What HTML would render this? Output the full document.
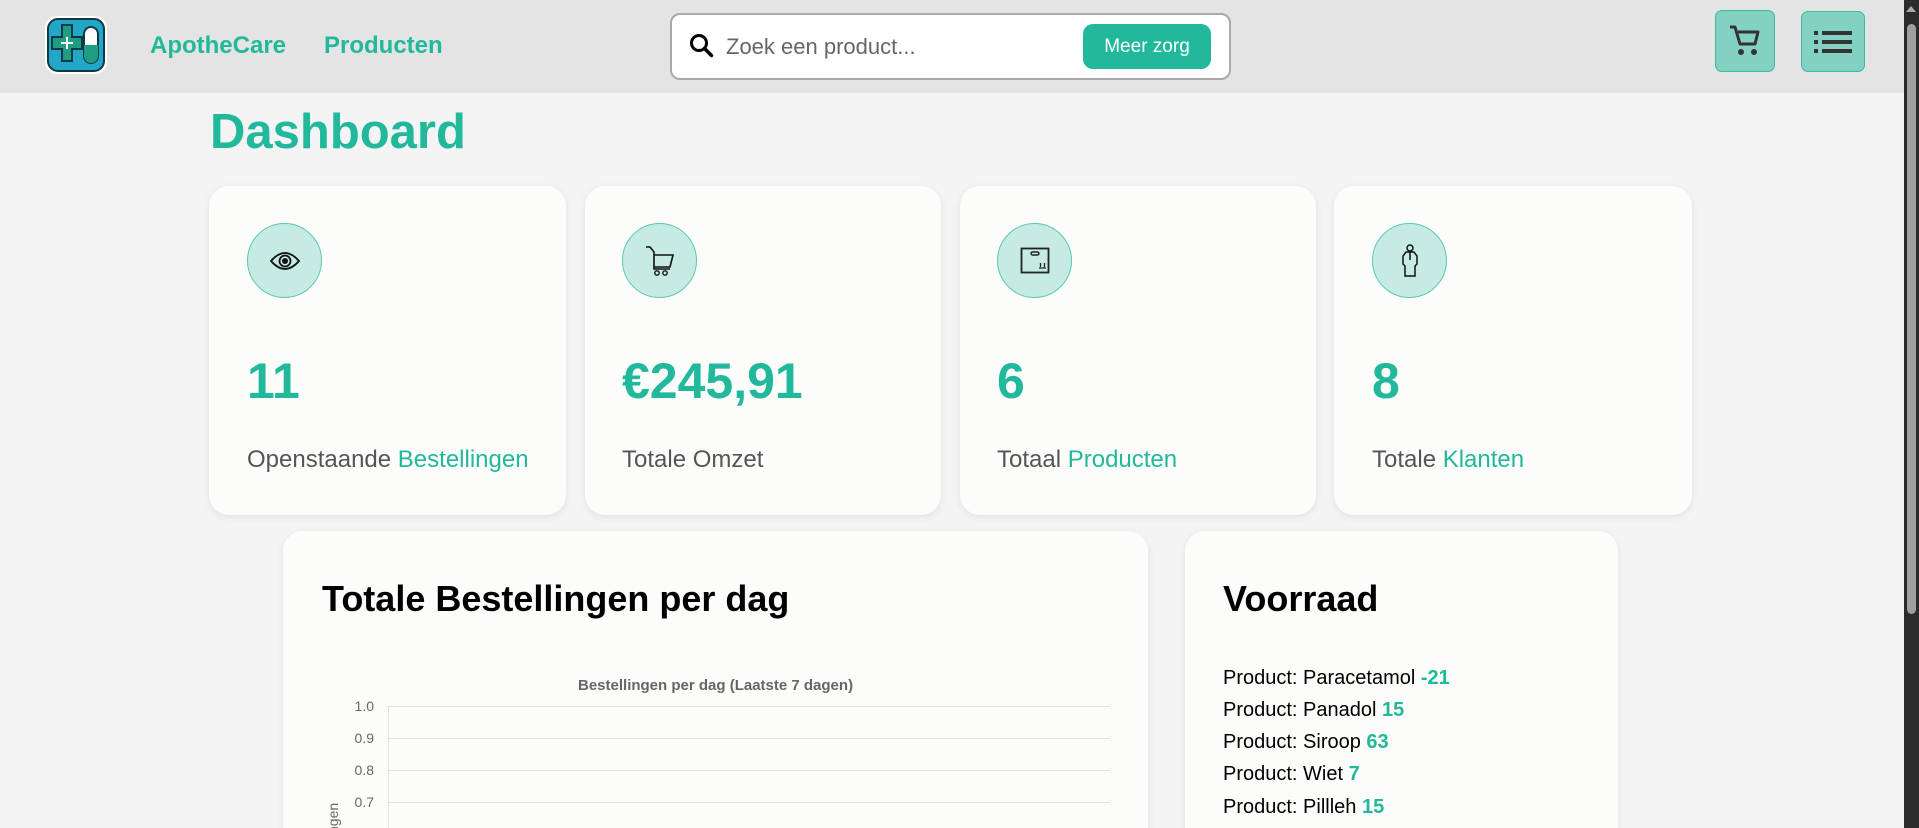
<!DOCTYPE html>
<html><head><meta charset="utf-8"><style>
*{margin:0;padding:0;box-sizing:border-box}
html,body{width:1919px;height:828px;overflow:hidden}
body{background:#f4f4f4;font-family:"Liberation Sans",sans-serif}
#w{position:relative;width:1919px;height:828px;overflow:hidden}
.hdr{position:absolute;left:0;top:0;width:1904px;height:93px;background:#e4e4e4}
.a{position:absolute}
.nav{font-weight:bold;color:#22b89c;font-size:24px}
.search{left:670px;top:13px;width:561px;height:67px;background:#fff;border:2px solid #a9a9a9;border-radius:10px}
.btn{left:1083px;top:24px;width:128px;height:45px;background:#22b89c;border-radius:10px;color:#fff;font-size:19px;text-align:center;line-height:45px}
.ib{background:#83d1c2;border:1px solid #3cbba3;border-radius:7px}
.card{background:#fcfdfb;border-radius:20px;box-shadow:0 2px 8px rgba(0,0,0,.08)}
.circ{width:75px;height:75px;border-radius:50%;background:#c6ebe2;border:1px solid #5bc8b1;display:flex;align-items:center;justify-content:center}
.num{font-size:50px;font-weight:bold;color:#22b89c}
.lbl{font-size:24px;color:#555}
.lbl span{color:#22b89c}
.prod{font-size:20px;color:#000;left:1223px}
.prod b{color:#22b89c}
.grid{left:387px;width:723px;height:1px;background:#e2e2e2}
.yl{width:40px;text-align:right;font-size:14px;color:#666;left:334px}
</style></head><body><div id="w">
<div class="hdr"></div>
<svg class="a" style="left:44px;top:15px" width="64" height="60" viewBox="0 0 64 60">
<rect x="1" y="1" width="62" height="58" rx="12" fill="#fff"/>
<rect x="4" y="4" width="56" height="52" rx="10" fill="#22a7c8" stroke="#0d3a44" stroke-width="2"/>
<path d="M18 10h10v12h10v12H28v12H18V34H8V22h10z" fill="#1f9d83" stroke="#0d3a44" stroke-width="2"/>
<rect x="40" y="12" width="14" height="36" rx="7" fill="#fff" stroke="#0d3a44" stroke-width="2"/>
<path d="M40 30h14v11a7 7 0 0 1-14 0z" fill="#1f9d83"/>
<path d="M23 22v12M17 28h12" stroke="#fff" stroke-width="2"/>
</svg>
<div class="a nav" style="left:150px;top:32px">ApotheCare</div>
<div class="a nav" style="left:324px;top:32px">Producten</div>
<div class="a search"></div>
<svg class="a" style="left:689px;top:33px" width="26" height="26" viewBox="0 0 26 26"><circle cx="10" cy="10" r="7.5" fill="none" stroke="#000" stroke-width="3"/><path d="M15.5 15.5l7 7" stroke="#000" stroke-width="3.5" stroke-linecap="round"/></svg>
<div class="a" style="left:726px;top:34px;font-size:22px;color:#666">Zoek een product...</div>
<div class="a btn">Meer zorg</div>
<div class="a ib" style="left:1715px;top:10px;width:60px;height:62px"></div>
<svg class="a" style="left:1729px;top:24px" width="32" height="32" viewBox="0 0 32 32"><path d="M1 3h5l5 17h15l3-12H9" fill="none" stroke="#333" stroke-width="3" stroke-linejoin="round"/><circle cx="12" cy="28" r="3" fill="#333"/><circle cx="25" cy="28" r="3" fill="#333"/></svg>
<div class="a ib" style="left:1801px;top:11px;width:64px;height:61px"></div>
<svg class="a" style="left:1814px;top:30px" width="38" height="24" viewBox="0 0 38 24"><g fill="#333"><rect x="0" y="1" width="4" height="4"/><rect x="0" y="10" width="4" height="4"/><rect x="0" y="19" width="4" height="4"/><rect x="8" y="1" width="30" height="4"/><rect x="8" y="10" width="30" height="4"/><rect x="8" y="19" width="30" height="4"/></g></svg>
<div class="a" style="left:1904px;top:0;width:15px;height:828px;background:#2b2b2b"></div>
<div class="a" style="left:1907px;top:24px;width:9px;height:590px;background:#9f9f9f;border-radius:5px"></div>
<div class="a" style="left:1906px;top:6px;width:0;height:0;border-left:5px solid transparent;border-right:5px solid transparent;border-bottom:6px solid #aaa"></div>

<div class="a" style="left:210px;top:104px;font-size:49px;font-weight:bold;color:#22b89c">Dashboard</div>

<div class="a card" style="left:209px;top:186px;width:357px;height:329px"></div>
<div class="a card" style="left:585px;top:186px;width:356px;height:329px"></div>
<div class="a card" style="left:960px;top:186px;width:356px;height:329px"></div>
<div class="a card" style="left:1334px;top:186px;width:358px;height:329px"></div>

<div class="a circ" style="left:247px;top:223px"><svg width="30" height="20" viewBox="0 0 30 20"><path d="M1 10Q15-6 29 10Q15 26 1 10z" fill="none" stroke="#111" stroke-width="1.8"/><circle cx="15" cy="10" r="5.5" fill="none" stroke="#111" stroke-width="1.8"/><circle cx="15" cy="10" r="3" fill="#111"/></svg></div>
<div class="a circ" style="left:622px;top:223px"><svg width="30" height="34" viewBox="0 0 30 34"><path d="M1 3h4l4 5v17h16M9 11h19l-3 12H9" fill="none" stroke="#111" stroke-width="1.6"/><circle cx="12" cy="29" r="2.2" fill="none" stroke="#111" stroke-width="1.4"/><circle cx="20" cy="29" r="2.2" fill="none" stroke="#111" stroke-width="1.4"/></svg></div>
<div class="a circ" style="left:997px;top:223px"><svg width="30" height="28" viewBox="0 0 30 28"><rect x="1.5" y="1.5" width="27" height="24" fill="none" stroke="#222" stroke-width="1.8"/><rect x="11" y="5" width="8" height="3" rx="1.5" fill="none" stroke="#222" stroke-width="1.4"/><path d="M19 21h7M20.5 20v-4M24.5 20v-4" stroke="#222" stroke-width="1.3"/></svg></div>
<div class="a circ" style="left:1372px;top:223px"><svg width="20" height="34" viewBox="0 0 20 34"><circle cx="10" cy="4" r="3" fill="none" stroke="#111" stroke-width="1.5"/><path d="M10 8v8M6 8h8l3 4v8l-2 2v10H5V22l-2-2v-8z" fill="none" stroke="#111" stroke-width="1.5"/></svg></div>

<div class="a num" style="left:247px;top:352px">11</div>
<div class="a num" style="left:622px;top:352px">€245,91</div>
<div class="a num" style="left:997px;top:352px">6</div>
<div class="a num" style="left:1372px;top:352px">8</div>
<div class="a lbl" style="left:247px;top:446px">Openstaande <span>Bestellingen</span></div>
<div class="a lbl" style="left:622px;top:446px">Totale Omzet</div>
<div class="a lbl" style="left:997px;top:446px">Totaal <span>Producten</span></div>
<div class="a lbl" style="left:1372px;top:446px">Totale <span>Klanten</span></div>

<div class="a card" style="left:283px;top:531px;width:865px;height:400px"></div>
<div class="a" style="left:322px;top:578px;font-size:36px;font-weight:bold;color:#000">Totale Bestellingen per dag</div>
<div class="a" style="left:578px;top:677px;font-size:15px;font-weight:bold;color:#666">Bestellingen per dag (Laatste 7 dagen)</div>
<div class="a grid" style="top:706px"></div>
<div class="a grid" style="top:738px"></div>
<div class="a grid" style="top:770px"></div>
<div class="a grid" style="top:802px"></div>
<div class="a" style="left:388px;top:706px;width:1px;height:122px;background:#e2e2e2"></div>
<div class="a yl" style="top:698px">1.0</div>
<div class="a yl" style="top:730px">0.9</div>
<div class="a yl" style="top:762px">0.8</div>
<div class="a yl" style="top:794px">0.7</div>
<div class="a yl" style="top:826px">0.6</div>
<div class="a" style="left:325px;top:834px;transform:rotate(-90deg);transform-origin:left top;font-size:14px;color:#666;white-space:nowrap">ngen</div>

<div class="a card" style="left:1185px;top:531px;width:433px;height:400px"></div>
<div class="a" style="left:1223px;top:578px;font-size:36px;font-weight:bold;color:#000">Voorraad</div>
<div class="a prod" style="top:667px">Product: Paracetamol <b>-21</b></div>
<div class="a prod" style="top:699px">Product: Panadol <b>15</b></div>
<div class="a prod" style="top:731px">Product: Siroop <b>63</b></div>
<div class="a prod" style="top:763px">Product: Wiet <b>7</b></div>
<div class="a prod" style="top:796px">Product: Pillleh <b>15</b></div>
</div></body></html>
